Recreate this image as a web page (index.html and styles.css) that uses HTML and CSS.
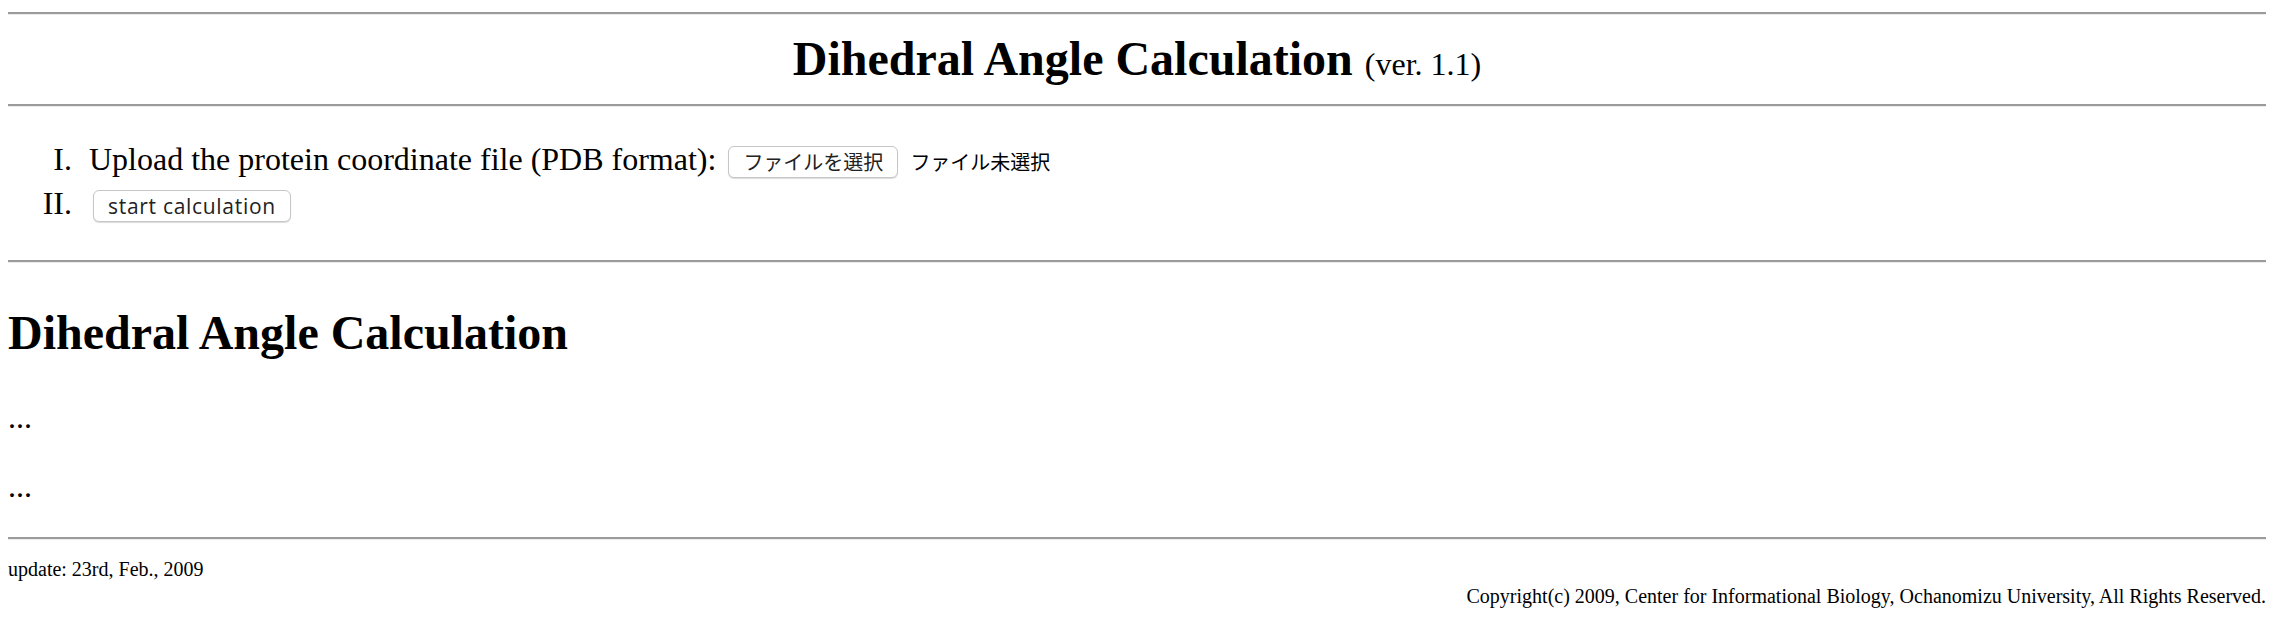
FILE: index.html
```html
<!DOCTYPE html>
<html lang="en">
<head>
<meta charset="utf-8">
<title>Dihedral Angle Calculation</title>
<link rel="stylesheet" href="styles.css">
</head>
<body>
<header class="masthead">
  <hr class="rule">
  <h1 class="title">Dihedral Angle Calculation <span class="version">(ver. 1.1)</span></h1>
  <hr class="rule">
</header>

<form class="upload">
  <ol class="steps">
    <li class="step">Upload the protein coordinate file (PDB format): <button type="button" class="btn btn-file">ファイルを選択</button><span class="file-status">ファイル未選択</span></li>
    <li class="step"><button type="button" class="btn btn-start">start calculation</button></li>
  </ol>
</form>

<hr class="rule">

<section class="result">
  <h2 class="result-title">Dihedral Angle Calculation</h2>
  <p class="result-line">...</p>
  <p class="result-line">...</p>
</section>

<hr class="rule">

<footer class="footer">
  <div class="update">update: 23rd, Feb., 2009</div>
  <div class="copyright">Copyright(c) 2009, Center for Informational Biology, Ochanomizu University, All Rights Reserved.</div>
</footer>
</body>
</html>
```

FILE: styles.css
```css
html {
  background: #ffffff;
}

body {
  margin: 12px 8px 8px;
  font-family: "Liberation Serif", "Times New Roman", serif;
  font-size: 32px;
  line-height: 1.15;
  color: #000000;
}

.rule {
  margin: 0;
  height: 0;
  border: 0;
  border-top: 2px solid #9b9b9b;
  border-bottom: 1px solid #ececec;
}

.title {
  margin: 16px 0 18px;
  font-size: 48px;
  font-weight: bold;
  line-height: 1.15;
  text-align: center;
}

.version {
  font-size: 32px;
  font-weight: normal;
}

.upload {
  margin: 0;
}

.steps {
  list-style: none;
  margin: 34px 0 38px;
  padding: 0;
  counter-reset: step;
}

.step {
  counter-increment: step;
}

.step + .step {
  margin-top: 7px;
}

.step::before {
  content: counter(step, upper-roman) ".";
  display: inline-block;
  width: 64px;
  padding-right: 17px;
  text-align: right;
}

.btn {
  display: inline-block;
  box-sizing: border-box;
  height: 32px;
  margin: 0 0 0 4px;
  padding: 0 14px;
  border: 1px solid #c6c6c6;
  border-radius: 6px;
  background: #ffffff;
  box-shadow: 0 1px 1px rgba(0, 0, 0, 0.14);
  color: #222222;
  line-height: 30px;
  vertical-align: baseline;
}

.btn-file {
  font-family: "Noto Sans CJK JP", "Noto Sans", sans-serif;
  font-size: 20px;
}

.btn-start {
  font-family: "Open Sans", "Noto Sans", sans-serif;
  font-size: 21px;
  letter-spacing: 0.7px;
}

.file-status {
  margin-left: 12px;
  font-family: "Noto Sans CJK JP", "Noto Sans", sans-serif;
  font-size: 20px;
}

.result-title {
  margin: 42px 0 39px;
  font-size: 48px;
  font-weight: bold;
  line-height: 1.15;
}

.result-line {
  margin: 32px 0;
}

.result-line:first-of-type {
  margin-top: 0;
}

.footer {
  font-size: 20px;
  line-height: 1.15;
}

.update {
  margin-top: 18px;
}

.copyright {
  margin-top: 4px;
  text-align: right;
}
```
